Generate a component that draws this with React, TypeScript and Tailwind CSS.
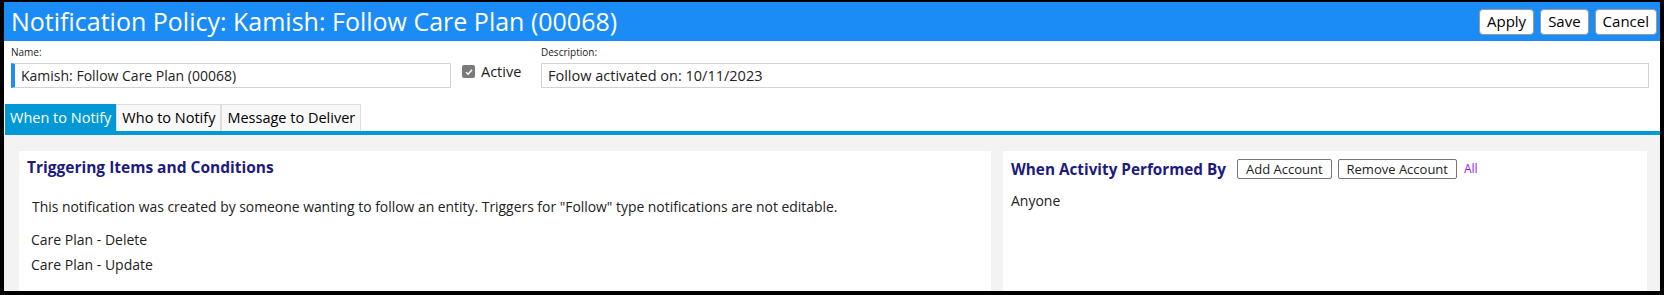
import React from 'react'

const font = { fontFamily: '"Open Sans", "Noto Sans", Arial, sans-serif' }

const HeaderButton = ({ label }: { label: string }) => (
  <button className="h-[26px] px-[7px] bg-white text-black text-[15px] rounded-[4px] border border-[#9a9a9a] leading-none">
    {label}
  </button>
)

const SmallButton = ({ label }: { label: string }) => (
  <button className="h-[20px] px-[8px] bg-white text-[#222] text-[13px] border border-[#767676] rounded-[2px] leading-none">
    {label}
  </button>
)

const Tab = ({ label, active }: { label: string; active?: boolean }) => (
  <div
    className={
      active
        ? 'h-[27px] flex items-center px-[5px] bg-[#0099d5] text-white text-[14.5px]'
        : 'h-[27px] flex items-center px-[5px] bg-[#f8f8f8] text-black text-[14.5px] border border-b-0 border-[#dedede]'
    }
  >
    {label}
  </div>
)

export default function App() {
  return (
    <div style={font} className="w-[1664px] h-[295px] bg-black pt-[2px] pl-[4px] pr-[4px] pb-[4px]">
      <div className="flex flex-col h-full bg-white overflow-hidden">
        <div className="flex-none flex items-center justify-between h-[39px] bg-[#1b8cf6] pl-[7px] pr-[3px]">
          <h1 className="text-[25px] text-white leading-none">Notification Policy: Kamish: Follow Care Plan (00068)</h1>
          <div className="flex items-center gap-[6px]">
            <HeaderButton label="Apply" />
            <HeaderButton label="Save" />
            <HeaderButton label="Cancel" />
          </div>
        </div>

        <div className="flex-none flex items-end pl-[7px] pr-[11px] pt-[4px]">
          <div className="flex flex-col w-[440px]">
            <label className="text-[10px] leading-[14px] text-[#222] mb-[4px]">Name:</label>
            <div className="h-[25px] flex items-center border border-[#d2d2d2] border-l-[4px] border-l-[#1e8ef6] pl-[6px] text-[14px] text-[#222]">
              Kamish: Follow Care Plan (00068)
            </div>
          </div>
          <div className="flex items-center gap-[6px] h-[25px] ml-[11px] mb-[4px] w-[79px]">
            <span className="flex items-center justify-center w-[13px] h-[13px] rounded-[2px] bg-[#7a7a7a]">
              <svg viewBox="0 0 12 12" className="w-[10px] h-[10px]">
                <path d="M2.5 6.2 L5 8.6 L9.6 3.4" fill="none" stroke="white" strokeWidth="1.8" />
              </svg>
            </span>
            <span className="text-[14.5px] text-[#222]">Active</span>
          </div>
          <div className="flex flex-col flex-1">
            <label className="text-[10px] leading-[14px] text-[#222] mb-[4px]">Description:</label>
            <div className="h-[25px] flex items-center border border-[#d2d2d2] pl-[6px] text-[14.5px] text-[#222]">
              Follow activated on: 10/11/2023
            </div>
          </div>
        </div>

        <div className="flex-none flex mt-[16px] ml-[1px]">
          <Tab label="When to Notify" active />
          <Tab label="Who to Notify" />
          <Tab label="Message to Deliver" />
        </div>
        <div className="flex-none h-[4px] bg-[#0099d5] ml-[1px]" />

        <div className="flex-1 flex gap-[12px] bg-[#f3f3f3] pt-[16px] pl-[15px] pr-[13px]">
          <div className="w-[972px] flex-none bg-white pl-[8px] pt-[6px]">
            <h2 className="text-[15.5px] font-bold text-[#1d1a80] leading-[20px]">Triggering Items and Conditions</h2>
            <p className="mt-[20px] ml-[5px] text-[13.9px] text-[#222] leading-[20px]">
              This notification was created by someone wanting to follow an entity. Triggers for "Follow" type notifications are not editable.
            </p>
            <div className="mt-[13px] ml-[4px] flex flex-col gap-[5px] text-[14px] text-[#222] leading-[20px]">
              <div>Care Plan - Delete</div>
              <div>Care Plan - Update</div>
            </div>
          </div>
          <div className="flex-1 bg-white pl-[8px] pt-[8px]">
            <div className="flex items-center">
              <h2 className="text-[15.3px] font-bold text-[#1d1a80] leading-[20px] mr-[11px]">When Activity Performed By</h2>
              <div className="flex items-center gap-[6px]">
                <SmallButton label="Add Account" />
                <SmallButton label="Remove Account" />
              </div>
              <span className="ml-[7px] text-[12px] text-[#8a1aff]">All</span>
            </div>
            <div className="mt-[12px] text-[14px] text-[#222] leading-[20px]">Anyone</div>
          </div>
        </div>
      </div>
    </div>
  )
}
